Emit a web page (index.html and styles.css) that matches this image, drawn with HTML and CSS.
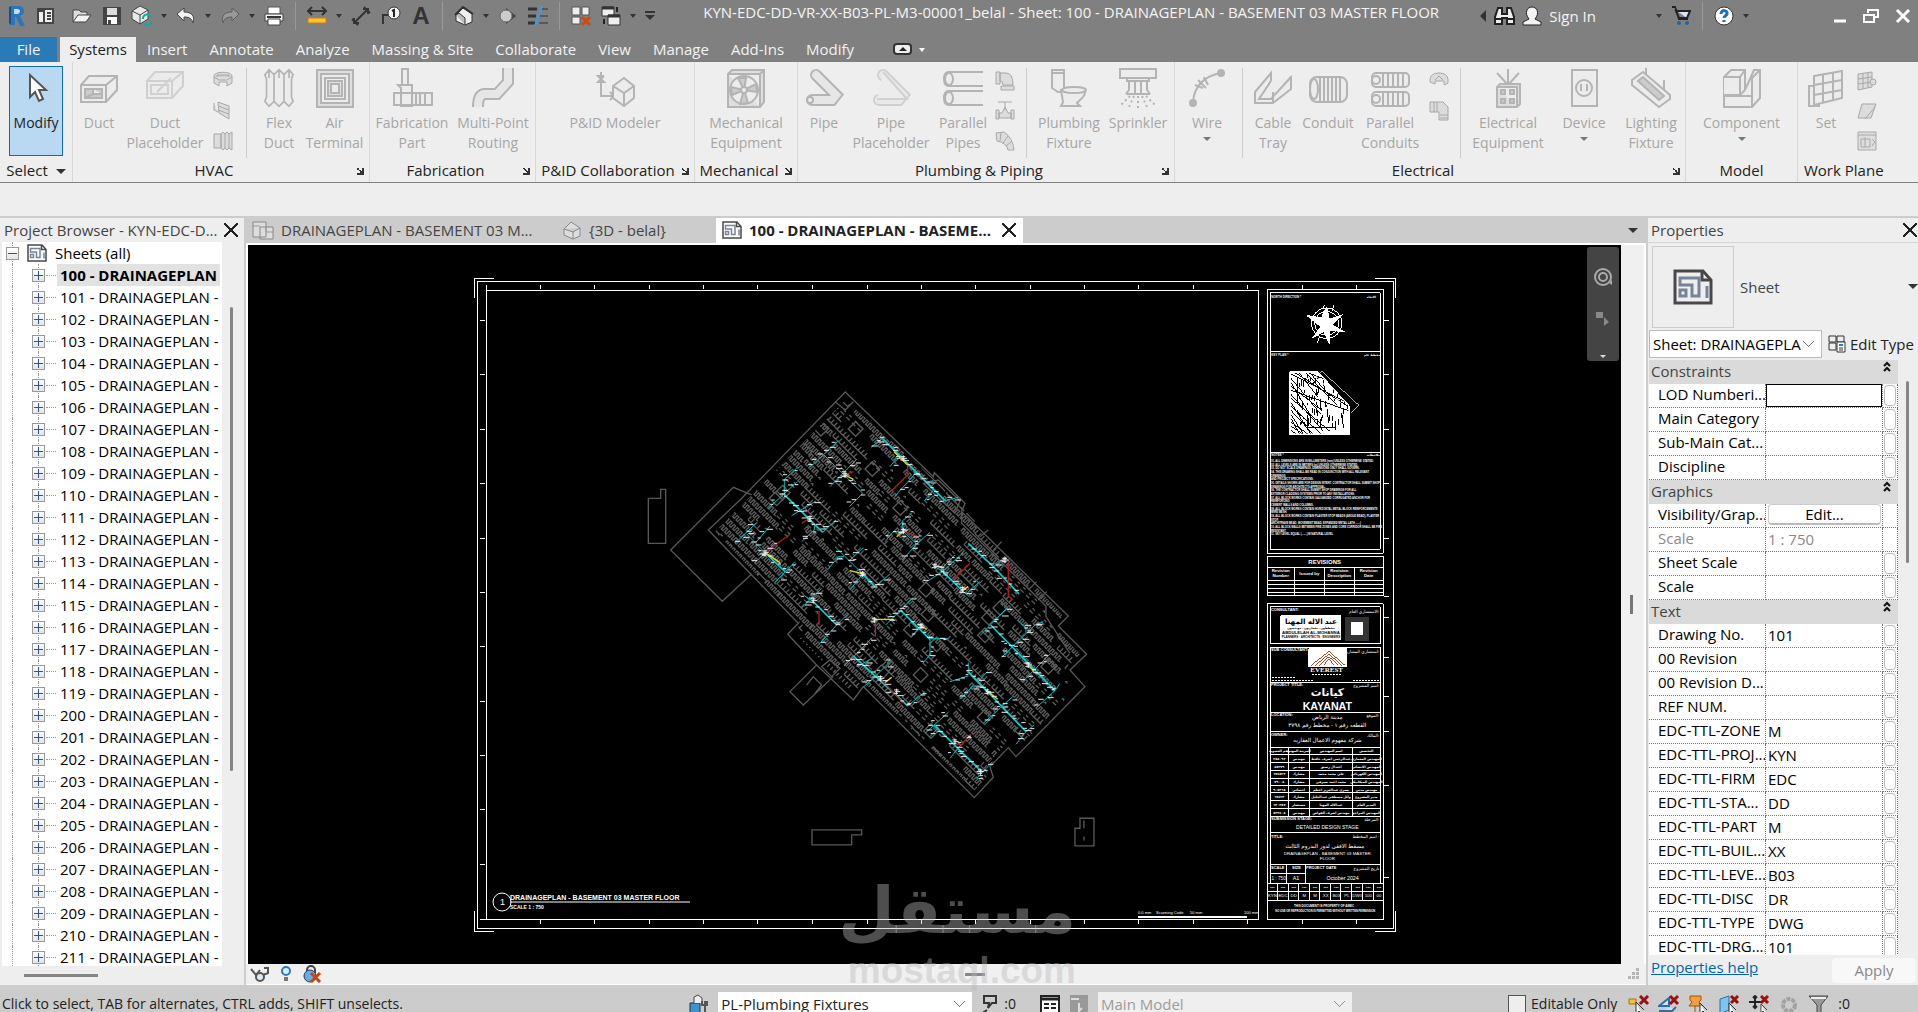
FILE: index.html
```html
<!DOCTYPE HTML>
<html lang="en">

<head>
  <meta charset="utf-8">
  <title>KYN-EDC-DD-VR-XX-B03-PL-M3-00001_belal</title>
  <link rel="stylesheet" href="styles.css">
</head>

<body>
<header class="titlebar">
  <div class="quick">
    <button class="q-logo" aria-label="Application"><svg width="18" height="22" viewBox="0 0 18 22"><path d="M3 1h7c4 0 6 2 6 5 0 2-1 4-4 5l5 10h-5L8 12H7v8H2z" fill="#2a76bd"/><path d="M6 4h3c2 0 3 1 3 2s-1 3-3 3H6z" fill="#bfe0f7"/><path d="M1 2l2-1v19l-2-2z" fill="#174f86"/></svg></button>
    <button class="q-icon" aria-label="Home"><svg width="20" height="20"><path d="M1 2h17v16H1z" fill="#444"/><path d="M3 6h4v10H3zM9 4h7v12H9z" fill="#eee"/><path d="M11 7h4M11 10h4M11 13h4" stroke="#444" stroke-width="2"/></svg></button>
    <button class="q-icon q-open" aria-label="Open"><svg width="20" height="20"><path d="M1 16V4h6l2 2h6v3" fill="#ddd" stroke="#444"/><path d="M1 16l5-7h13l-5 7z" fill="#f4f4f4" stroke="#444"/></svg></button>
    <button class="q-icon" aria-label="Save"><svg width="20" height="20"><path d="M1 1h18v18H1z" fill="#444"/><path d="M5 2h10v7H5z" fill="#ddd"/><path d="M5 11h10v7H5z" fill="#fff"/><path d="M6 14h3v4H6z" fill="#444"/></svg></button>
    <button class="q-icon" aria-label="Sync"><svg width="22" height="22"><path d="M1 6l8-5 8 4v9l-8 5-8-5z" fill="#e8e8e8" stroke="#444"/><path d="M1 6l8 4 8-5M9 10v9" fill="none" stroke="#444"/><path d="M12 14a4 4 0 0 1 8-1M20 16a4 4 0 0 1-7 3" fill="none" stroke="#13a7a7" stroke-width="2"/></svg></button>
    <button class="q-drop" aria-label="Sync options"></button>
    <button class="q-icon" aria-label="Undo"><svg width="20" height="18"><path d="M1 7l7-6v4c8 0 11 4 9 11-1-4-3-6-9-6v4z" fill="#f2f2f2" stroke="#444"/></svg></button>
    <button class="q-drop" aria-label="Undo list"></button>
    <button class="q-icon" aria-label="Redo"><svg width="20" height="18"><path d="M19 7l-7-6v4C4 5 1 9 3 16c1-4 3-6 9-6v4z" fill="#999" stroke="#5c5c5c"/></svg></button>
    <button class="q-drop" aria-label="Redo list"></button>
    <button class="q-icon" aria-label="Print"><svg width="20" height="20"><path d="M4 1h12v7H4z" fill="#fff" stroke="#555"/><path d="M1 8h18v7H1z" fill="#f3f3f3" stroke="#444"/><path d="M4 13h12v6H4z" fill="#fff" stroke="#444"/><path d="M3 11h14" stroke="#333" stroke-width="2"/></svg></button>
    <i class="q-sep"></i>
    <button class="q-icon" aria-label="Measure"><svg width="20" height="20"><path d="M1 5h18M5 1L1 5l4 4M15 1l4 4-4 4" fill="none" stroke="#333" stroke-width="2"/><path d="M1 12h18v5H1z" fill="#f7c52d" stroke="#d77a12"/></svg></button>
    <button class="q-drop" aria-label="Measure options"></button>
    <button class="q-icon" aria-label="Aligned dimension"><svg width="20" height="20"><path d="M3 17L17 3M1 13l6 6M13 1l6 6M3 12v5h5M12 3h5v5" fill="none" stroke="#333" stroke-width="2"/></svg></button>
    <button class="q-icon" aria-label="Tag"><svg width="20" height="20"><path d="M2 18V9h7" fill="none" stroke="#333" stroke-width="2"/><circle cx="13" cy="7" r="6" fill="#f4f4f4" stroke="#333"/><path d="M11 5l2-1v7" fill="none" stroke="#222" stroke-width="2"/></svg></button>
    <button class="q-icon q-text" aria-label="Text">A</button>
    <i class="q-sep"></i>
    <button class="q-icon" aria-label="Default 3D view"><svg width="20" height="20"><path d="M2 9l7-7 9 6v8l-7 3-9-4z" fill="#eee" stroke="#333"/><path d="M2 9l3-2 6 5v7" fill="#bbb" stroke="#333"/><path d="M1 9l8-8 10 7" fill="none" stroke="#333" stroke-width="2"/></svg></button>
    <button class="q-drop" aria-label="3D options"></button>
    <button class="q-icon" aria-label="Section"><svg width="20" height="20"><path d="M8 2l10 8-10 8z" fill="#444"/><circle cx="8" cy="10" r="6" fill="#ccc" stroke="#666"/></svg></button>
    <button class="q-icon" aria-label="Thin lines"><svg width="20" height="20"><path d="M0 3h9M0 10h8M0 17h7" stroke="#333" stroke-width="3"/><path d="M13 3h7M12 10h8M11 17h9" stroke="#333"/><path d="M14 0L7 20" stroke="#3d9ae8" stroke-width="2"/></svg></button>
    <i class="q-sep"></i>
    <button class="q-icon" aria-label="Close inactive"><svg width="20" height="20"><path d="M1 1h8v8H1zM11 1h7v8h-7zM1 11h8v7H1z" fill="#eee" stroke="#555"/><path d="M11 11l8 8M19 11l-8 8" stroke="#cf4a13" stroke-width="3"/></svg></button>
    <button class="q-icon" aria-label="Switch windows"><svg width="20" height="20"><path d="M1 1h12v9H1zM7 9h12v10H7z" fill="#eee" stroke="#333"/><path d="M1 2h12M7 10h12" stroke="#333" stroke-width="3"/><path d="M16 1v5M3 13v5" stroke="#222" stroke-width="2"/></svg></button>
    <button class="q-drop" aria-label="Window list"></button>
    <button class="q-custom" aria-label="Customize"><svg width="12" height="10"><path d="M1 1h10" stroke="#333" stroke-width="2"/><path d="M1 4h10L6 9z" fill="#333"/></svg></button>
  </div>
  <h1 class="doc-title">KYN-EDC-DD-VR-XX-B03-PL-M3-00001_belal - Sheet: 100 - DRAINAGEPLAN - BASEMENT 03 MASTER FLOOR</h1>
  <div class="account">
    <button class="q-left" aria-label="Collapse search"></button>
    <button class="q-icon" aria-label="Search"><svg width="22" height="20"><path d="M4 2h4v6h5V2h4l3 9v7h-7v-6H8v6H1v-7z" fill="#eee" stroke="#222" stroke-width="2"/><path d="M1 13h7M13 13h7" stroke="#222" stroke-width="2"/></svg></button>
    <button class="sign-in"><svg width="20" height="20"><path d="M1 19v-3l6-3c-5-6-2-12 3-12s8 6 3 12l6 3v3z" fill="#f2f2f2" stroke="#222"/></svg>Sign In</button>
    <button class="q-drop" aria-label="Account"></button>
    <button class="q-icon" aria-label="App store"><svg width="20" height="20"><path d="M1 1h3l4 12h9M5 5h14l-3 7H8z" fill="#dce6f2" stroke="#222" stroke-width="2"/><circle cx="8" cy="17" r="2" fill="#2563a8"/><circle cx="16" cy="17" r="2" fill="#2563a8"/></svg></button>
    <i class="q-sep"></i>
    <button class="q-icon" aria-label="Help"><svg width="22" height="22"><circle cx="11" cy="11" r="9" fill="#fff" stroke="#333"/><path d="M8 9c0-5 7-4 6 0-1 2-3 2-3 4M11 15v2" fill="none" stroke="#1b6fc0" stroke-width="3"/></svg></button>
    <button class="q-drop" aria-label="Help menu"></button>
    <div class="window-buttons">
      <button aria-label="Minimize"><svg width="14" height="14"><path d="M1 12h12" stroke="#fff" stroke-width="3"/></svg></button>
      <button aria-label="Restore"><svg width="16" height="16"><path d="M5 5V2h10v7h-4M1 7h10v7H1z" fill="none" stroke="#fff" stroke-width="2"/></svg></button>
      <button aria-label="Close"><svg width="16" height="16"><path d="M2 2l12 12M14 2L2 14" stroke="#fff" stroke-width="3"/></svg></button>
    </div>
  </div>
</header>

<nav class="tabs">
  <button class="tab-file">File</button>
  <button class="tab-active">Systems</button>
  <button>Insert</button>
  <button>Annotate</button>
  <button>Analyze</button>
  <button>Massing &amp; Site</button>
  <button>Collaborate</button>
  <button>View</button>
  <button>Manage</button>
  <button>Add-Ins</button>
  <button>Modify</button>
  <button class="tab-toggle" aria-label="Minimize ribbon"><svg width="32" height="12"><rect x="1" y="1" width="17" height="10" rx="3" fill="#eee" stroke="#333" stroke-width="2"/><path d="M6 8l4-4 4 4z" fill="#222"/><path d="M26 5h6l-3 4z" fill="#fff"/></svg></button>
</nav>

<section class="ribbon">
  <div class="panel panel-select">
    <div class="tools">
      <button class="tool tool-modify"><svg width="36" height="40" viewBox="0 0 36 40"><path d="M12 6v22l5-5 4 9 4-2-4-9h7z" fill="#fff" stroke="#555" stroke-width="2"/></svg>Modify</button>
    </div>
    <div class="panel-title">Select <i class="down"></i></div>
  </div>

  <div class="panel panel-hvac">
    <div class="tools">
      <button class="tool"><svg class="art" width="40" height="40"><path d="M2 17L10 8h28v14L27 34H2z"/><path d="M2 17h25v17M27 17L38 8"/><path class="hole" d="M6 21h17v9H6z"/><path d="M14 21v5h9M14 26l-8 4"/></svg>Duct</button>
      <button class="tool"><svg class="art faint" width="40" height="40"><path d="M2 13L10 4h28v14L27 30H2z"/><path d="M2 13h25v17M27 13L38 4"/><path d="M6 17h17v9H6zM12 24l14-14"/></svg>Duct<br>Placeholder</button>
      <div class="small-tools">
        <button aria-label="Duct fitting"><svg class="art" width="20" height="20"><path d="M1 5c0-5 18-5 18 0v7l-5 3v-4H6v4l-5-3z"/><path class="hole" d="M4 4h12v3H4z"/><path d="M1 6l5 3h8l5-3"/></svg></button>
        <button aria-label="Duct accessory"><svg class="art" width="20" height="20"><path d="M5 1l11 4v13L6 12zM5 5l11 4M5 9l11 4M1 2v7l4 2"/></svg></button>
        <button aria-label="Convert to flex duct"><svg class="art" width="20" height="20"><path d="M1 3h7v14H1zM8 3l2-2 2 2 2-2 2 2 3-2v18l-3-2-2 2-2-2-2 2-2-2zM12 3v14M16 3v14"/></svg></button>
      </div>
      <i class="tool-sep"></i>
      <button class="tool"><svg class="art" width="36" height="48" viewBox="0 0 36 48"><path d="M1 8l5-6 6 6 6-6 6 6 6-6 5 6-2 5v22l2 5-5 6-6-6-6 6-6-6-6 6-5-6 2-5V13zM12 8v32M24 8v32M6 2v10M18 2v10M30 2v10"/></svg>Flex<br>Duct</button>
      <button class="tool"><svg class="art" width="38" height="40"><path class="shade" d="M1 2h36v37H1z"/><path d="M5 6h28v29H5zM9 10h20v21H9z"/><path class="shade" d="M12 13h14v15H12z"/><path d="M15 16h8v9h-8z"/></svg>Air<br>Terminal</button>
    </div>
    <div class="panel-title has-launch">HVAC<i class="launch"></i></div>
  </div>

  <div class="panel panel-fabrication">
    <div class="tools">
      <button class="tool"><svg class="art" width="40" height="40"><path d="M10 1h6v16h-6zM2 25h38v12H2zM6 17h14v21H9V20z"/><path d="M24 25v12M28 25v12M33 25v12"/></svg>Fabrication<br>Part</button>
      <button class="tool"><svg class="art" width="40" height="40"><path class="pipe-edge" d="M35 0v14L24 26H12q-7 0-7 13"/><path class="pipe" d="M35 0v14L24 26H12q-7 0-7 13"/></svg>Multi-Point<br>Routing</button>
    </div>
    <div class="panel-title has-launch">Fabrication<i class="launch"></i></div>
  </div>

  <div class="panel panel-pid">
    <div class="tools">
      <button class="tool"><svg class="art" width="40" height="40"><path d="M6 4v24h12M3 8l6 6M9 8l-6 6h6L3 8h6M15 24l4 4-4 4"/><path d="M18 18l11-8 10 8v12l-10 8-11-8z"/><path d="M18 18l11 7 10-7M29 25v13"/></svg>P&amp;ID Modeler</button>
    </div>
    <div class="panel-title has-launch">P&amp;ID Collaboration<i class="launch"></i></div>
  </div>

  <div class="panel panel-mechanical">
    <div class="tools">
      <button class="tool"><svg class="art" width="40" height="40"><path class="shade" d="M2 6l4-4h32v32l-4 5H2z"/><path d="M2 6h32v33M34 6l4-4"/><circle cx="18" cy="22" r="14"/><path class="hole" d="M18 22L12 10h8zM18 22l12-6 1 8zM18 22l4 13-8 1zM18 22L6 27l-1-8z"/><circle cx="18" cy="22" r="3"/></svg>Mechanical<br>Equipment</button>
    </div>
    <div class="panel-title has-launch">Mechanical<i class="launch"></i></div>
  </div>

  <div class="panel panel-plumbing">
    <div class="tools">
      <button class="tool"><svg class="art" width="40" height="40"><path class="pipe-edge" stroke-linecap="round" d="M12 7l20 20-4 5H8"/><path class="pipe" stroke-linecap="round" d="M12 7l20 20-4 5H8"/><circle cx="6" cy="32" r="3"/></svg>Pipe</button>
      <button class="tool"><svg class="art faint" width="40" height="40"><path class="pipe-edge" stroke-linecap="round" d="M12 7l20 20-4 5H8"/><path class="pipe" stroke-linecap="round" d="M12 7l20 20-4 5H8"/><path d="M12 4l24 27H6"/></svg>Pipe<br>Placeholder</button>
      <button class="tool"><svg class="art" width="40" height="40"><path d="M40 4H6q-5 0-5 7t5 7h34M40 23H6q-5 0-5 7t5 7h34"/><ellipse cx="6" cy="11" rx="4" ry="6"/><ellipse cx="6" cy="30" rx="4" ry="6"/></svg>Parallel<br>Pipes</button>
      <div class="small-tools">
        <button aria-label="Pipe fitting"><svg class="art" width="20" height="20"><path d="M1 1h4v12H1zM5 2h6q7 0 7 12H8q0-4-3-4zM6 15h13v4H6z"/></svg></button>
        <button aria-label="Pipe accessory"><svg class="art" width="20" height="20"><path d="M3 1h14M10 1v8M1 9h3v9H1zM16 9h3v9h-3zM4 12h3l3-6 3 6h3v5H4z"/></svg></button>
        <button aria-label="Flex pipe"><svg class="art" width="20" height="20"><path d="M1 2l8-1q9 6 10 18h-6Q12 12 2 10zM6 1l-1 9M13 5l-5 7M17 10l-6 5"/></svg></button>
      </div>
      <i class="tool-sep"></i>
      <button class="tool"><svg class="art" width="40" height="40"><path d="M3 2h12v22h-6L3 20z"/><path d="M3 5h12M12 22h24q1 5-4 9l-4 4 3 3H12l2-4z"/><ellipse cx="25" cy="22" rx="12" ry="3"/></svg>Plumbing<br>Fixture</button>
      <button class="tool"><svg class="art" width="40" height="40"><path d="M2 1h36v9H2zM9 10h22v3H9zM11 13v9l-3 4M17 13v14M23 13v14M29 13v9l3 4M8 26h24"/><path stroke-dasharray="2 3" d="M12 28L3 37M16 28l-5 11M20 28v12M24 28l5 11M28 28l9 9"/></svg>Sprinkler</button>
    </div>
    <div class="panel-title has-launch">Plumbing &amp; Piping<i class="launch"></i></div>
  </div>

  <div class="panel panel-electrical">
    <div class="tools">
      <button class="tool"><svg class="art" width="40" height="40"><path class="thin" d="M6 34Q8 10 34 5"/><circle class="dot" cx="6" cy="35" r="3"/><circle class="dot" cx="34" cy="5" r="3"/><path d="M8 17l8 3M17 9l4 8M11 12l8 8"/></svg>Wire<i class="down"></i></button>
      <i class="tool-sep"></i>
      <button class="tool"><svg class="art" width="40" height="40"><path d="M2 24L18 5v8l-5 8 5 4L38 9v12L20 35H2z"/><path d="M2 24v11M20 24v11M18 13L6 31h12L38 9"/></svg>Cable<br>Tray</button>
      <button class="tool"><svg class="art" width="40" height="40"><rect x="2" y="9" width="37" height="25" rx="7"/><ellipse cx="6" cy="21" rx="4" ry="10"/><path d="M12 9v25M16 9v25M20 9v25M24 9v25M28 9v25M32 9v25"/></svg>Conduit</button>
      <button class="tool"><svg class="art" width="40" height="40"><rect x="2" y="5" width="37" height="14" rx="4"/><rect x="2" y="24" width="37" height="14" rx="4"/><circle cx="6" cy="12" r="4"/><circle cx="6" cy="31" r="4"/><path d="M13 5v14M18 5v14M23 5v14M28 5v14M33 5v14M13 24v14M18 24v14M23 24v14M28 24v14M33 24v14"/></svg>Parallel<br>Conduits</button>
      <div class="small-tools">
        <button aria-label="Cable tray fitting"><svg class="art" width="20" height="20"><path d="M1 8q1-6 9-6t9 6v4l-4 2v-4H6v3l-5-2z"/><path d="M6 9l4-4 4 4"/></svg></button>
        <button aria-label="Conduit fitting"><svg class="art" width="20" height="20"><path d="M1 1h13l5 5v13h-9v-8H1zM5 1v10M8 1v10M11 14h8M11 17h8"/></svg></button>
      </div>
      <i class="tool-sep"></i>
      <button class="tool"><svg class="art" width="40" height="40"><path d="M20 1v16M9 5l11 12L31 5"/><path class="shade" d="M9 19l3-3h20v20l-3 3H9z"/><path d="M9 19h20v20"/><path class="hole" d="M13 22h4v4h-4zM22 22h4v4h-4zM13 31h4v4h-4zM22 31h4v4h-4z"/></svg>Electrical<br>Equipment</button>
      <button class="tool"><svg class="art" width="40" height="40"><path d="M8 2h25v36H8z"/><circle cx="20" cy="20" r="8"/><path d="M17 16v7M23 16v7"/></svg>Device<i class="down"></i></button>
      <button class="tool"><svg class="art" width="40" height="40"><path d="M15 0v8M33 12v10"/><path d="M1 12l11-8 27 23v4l-11 8L1 17z"/><path class="hole" d="M7 13l5-4 21 19-5 4z"/></svg>Lighting<br>Fixture</button>
    </div>
    <div class="panel-title has-launch">Electrical<i class="launch"></i></div>
  </div>

  <div class="panel panel-model">
    <div class="tools">
      <button class="tool"><svg class="art" width="40" height="40"><path d="M2 9l7-7h14v20L32 2h6v28l-8 9H2z"/><path d="M2 9h16v18H2M18 9l5-7M18 27l5-5M30 10v19M30 10l8-8M2 28h28v11"/></svg>Component<i class="down"></i></button>
    </div>
    <div class="panel-title">Model</div>
  </div>

  <div class="panel panel-plane">
    <div class="tools">
      <button class="tool"><svg class="art" width="40" height="40"><path d="M3 18h10v20H3z"/><path d="M8 8l28-5v27L8 37zM8 17l28-5M8 27l28-5M17 6v29M27 5v27"/></svg>Set</button>
      <div class="small-tools">
        <button aria-label="Show"><svg class="art" width="20" height="20"><path d="M1 3l14-2v15L1 19zM1 8l14-2M1 13l14-2M6 2v16M11 2v15"/><circle cx="16" cy="11" r="3"/></svg></button>
        <button aria-label="Reference plane"><svg class="art" width="20" height="20"><path d="M5 3h14L14 17H1zM8 18L18 6"/></svg></button>
        <button aria-label="Viewer"><svg class="art" width="20" height="20"><path class="shade" d="M1 1h18v18H1z"/><path d="M1 4h18M4 8h9v8H4zM8 6v10M15 8l3 3-3 4"/></svg></button>
      </div>
    </div>
    <div class="panel-title">Work Plane</div>
  </div>
</section>
<div class="options-bar"></div>

<main class="workspace">
  <aside class="browser">
    <div class="dock-title"><h2>Project Browser - KYN-EDC-D...</h2><button class="close" aria-label="Close project browser"></button></div>
    <div class="tree-area">
      <ul class="tree" id="sheet-tree">
        <li class="root"><button class="toggle minus" aria-label="Collapse"></button>
          <svg class="sheet-icon" width="20" height="18" viewBox="0 0 40 36"><use href="#sheet"/></svg><span>Sheets (all)</span></li>
      </ul>
      <div class="v-scroll"><i></i></div>
    </div>
    <div class="h-scroll"><i></i></div>
  </aside>

  <section class="views">
    <div class="view-tabs">
      <button><svg width="22" height="20"><path d="M1 2h13v15H1zM8 7h13v12H8z" fill="#ddd" stroke="#888"/><path d="M1 6h7M14 7v5h7" fill="none" stroke="#999"/></svg>DRAINAGEPLAN - BASEMENT 03 M...</button>
      <button><svg width="20" height="20"><path d="M2 9l7-7 9 6v8l-7 3-9-4zM11 11v8M2 9l9 3 7-4" fill="#ddd" stroke="#888"/></svg>{3D - belal}</button>
      <button class="current"><svg width="20" height="18" viewBox="0 0 40 36"><use href="#sheet"/></svg>100 - DRAINAGEPLAN - BASEME...<i class="close"></i></button>
      <i class="down"></i>
    </div>
    <div class="view-body">
      <div class="canvas">
        <svg class="drawing" viewBox="248 245 1373 719">
          <defs>
            <symbol id="sheet" viewBox="0 0 40 36"><path d="M2 2h28l8 9v23H2z" fill="#f0f0f0" stroke="#484848" stroke-width="3"/><path d="M29 2v9h9" fill="#ddd" stroke="#484848" stroke-width="3"/><path d="M7 9h19v18h-7V16H7zM7 21h6v6H7zM34 17v12" fill="none" stroke="#76849a" stroke-width="3"/></symbol>
            <clipPath id="plan-clip"><path d="M616 90L880 325 960 405 1270 738 1240 768 1320 853 1275 900 1315 950 1128 1140 1100 1120 1045 1180 1040 1222 1003 1262 670 935 640 970 475 800 475 745 225 485 330 380z"/></clipPath>
            <clipPath id="key-clip"><path d="M122 309H205L298 410V491H122z"/></clipPath>
          </defs>

          <!-- sheet border -->
          <g class="frame">
            <path d="M494 278H474V298M1375 278H1395V298M494 931H474V911M1375 931H1395V911"/>
            <path d="M477 281H1393V928H477zM486 290H1258V919H486zM486 285V919M480 919H486"/>
            <path d="M486 285v4M540 285v4M594 285v4M649 285v4M703 285v4M757 285v4M812 285v4M867 285v4M921 285v4M975 285v4M1030 285v4M1084 285v4M1138 285v4M1193 285v4M1247 285v4M1302 285v4M1356 285v4M540 919v5M594 919v5M649 919v5M703 919v5M757 919v5M812 919v5M867 919v5M921 919v5M975 919v5M1030 919v5M1084 919v5M1138 919v5M1193 919v5M1247 919v5M1302 919v5M1356 919v5"/>
            <path d="M480 320h5M480 374h5M480 429h5M480 483h5M480 538h5M480 592h5M480 646h5M480 701h5M480 755h5M480 809h5M480 864h5M1384 320h5M1384 374h5M1384 429h5M1384 483h5M1384 538h5M1384 596h5M1384 617h5M1384 657h5M1384 696h5M1384 731h5M1384 785h5M1384 877h5"/>
            <path d="M1138 917H1247" class="heavy"/>
          </g>

          <!-- floor plan, drawn on a grid three times finer than the sheet -->
          <g class="plan" transform="translate(640 370) scale(.3333)">
            <g clip-path="url(#plan-clip)"><path class="clutter" id="clutter"/></g>
            <g class="outline">
              <path d="M616 66L880 320 883 308 975 400 965 425 1285 738 1255 768 1340 853 1290 900 1335 950 1128 1160 1105 1133 1050 1190 1060 1222 1003 1283 670 950 640 990 530 885 443 793 475 760 205 480 300 390z"/>
              <path d="M616 120L585 95M640 95L616 120M965 425V460L1200 690 1218 708V740L1290 850M895 330L960 392 945 430 850 340zM1020 500L1045 480M1060 540L1085 515M1165 660L1190 635M1195 690L1220 665"/>
              <path d="M335 375L280 352 92 540 247 694 335 612M25 385H62V358H77V520H25zM530 885L450 965 490 1005 580 920M500 945L520 920 545 945 525 970M545 890L575 920 600 895 570 870z"/>
              <path d="M516 1380H665V1395H635V1425H516zM1305 1428V1375H1320V1345H1362V1428zM1332 1352V1375M1332 1400V1412"/>
            </g>
            <path class="cyan bold" d="M727 205L915 392M433 374L548 487M375 548L435 605M668 612L705 650M522 697L590 765M783 722L870 808M985 520L1060 590 1137 672M908 605L970 665M1052 765L1245 962M985 905L1158 1085M640 858L803 1008M882 1065L1025 1205"/>
            <path class="cyan" id="pipes" d="M727 205L693 232M915 392L955 382M865 343L878 330M825 305V312L765 378M770 265L750 290M880 360L853 393M595 212L510 292M552 255L668 370 628 410M650 268L570 350M470 295L433 328V374M548 487L588 450M472 335L385 415M528 393L455 437M523 465V480L485 515M348 460L285 520M320 492L375 548M390 468L350 515M465 575L405 637M405 520L345 578M585 530L668 612M705 650L750 612M670 533L630 570M612 560H595L565 597M668 612L630 660M815 430L788 452V482L830 522 787 570M735 515L760 485H790M870 487L830 522M545 655L483 715M490 675L522 697M590 765L622 733M590 765L540 820M820 682L737 765M870 806H925M870 808V855L848 880M840 770L815 800M1092 568L1060 590M970 548L908 605 855 638M878 585L908 605M970 665L988 680M945 555L900 600M1020 635L985 665M1100 715L1020 797M1245 962L1190 1012M1260 940L1245 962M1210 755L1185 765 1085 862M1135 752L1158 775V790M1232 850L1148 935M985 878V905M1158 1085L1183 1065M1158 1085L1128 1123M1042 905L1015 935M985 918L930 935M1023 948H1000L958 988M1118 980L1030 1060M697 803L612 888M803 1008L855 965M697 865L650 890M757 868L705 920 672 950M925 1027L855 1090M893 1075L870 1100M990 1095L950 1140 930 1165M1058 1175L1010 1225"/>
            <path class="red" d="M803 285V315L755 362M375 548L450 493M537 722V765M990 580L938 630M1105 575V680L1120 690M790 483L832 500M725 930L790 1000M940 1120L965 1125 992 1093M615 315L640 305M485 460L500 450"/>
            <path class="yellow" d="M762 245L803 285M375 548L420 578M630 602L668 612M705 748H762M840 765L860 778M735 938L755 922M1045 965L1073 988M790 483L770 500M615 315L640 328M970 658L985 650M1170 890L1182 905"/>
            <path class="magenta" d="M706 760V800"/>
            <path class="tags" id="tags"/>
          </g>

          <g class="view-title">
            <circle cx="502" cy="902" r="9"/>
            <text x="500" y="905" font-size="9">1</text>
            <text x="510" y="900" font-size="7" font-weight="bold">DRAINAGEPLAN - BASEMENT 03 MASTER FLOOR</text>
            <path d="M510 902H690"/>
            <text x="510" y="909" font-size="5" font-weight="bold">SCALE 1 : 750</text>
            <text x="1138" y="914" font-size="4">0.0 mm</text><text x="1156" y="914" font-size="4">Scanning Code</text><text x="1190" y="914" font-size="4">50 mm</text><text x="1244" y="914" font-size="4">100 mm</text>
          </g>

          <!-- title block: key plan, notes, revisions -->
          <g class="block" transform="translate(1250 270) scale(.3333)">
            <path d="M52 58H400V850H52zM61 68H391V838H61zM61 244H391M61 547H391M52 859H400V978H52zM52 892H400M52 931H400M52 943H400M52 955H400M52 967H400M133 892V978M223 892V978M313 892V978"/>
            <g class="compass">
              <circle cx="230" cy="160" r="46"/><circle cx="230" cy="160" r="36"/>
              <path class="solid" d="M230 110l8 38 40-14-32 30 38 22-44-6-2 42-16-38-34 20 24-34-42-34 44 8z"/>
              <path d="M172 135l20 8M284 186l-20-8M202 220l6-18M218 118l6-14M252 105l-6 18"/>
            </g>
            <path class="key-solid" d="M120 306H205L300 410V494H120z"/>
            <g clip-path="url(#key-clip)"><path class="key-hatch" id="key-hatch"/></g>
            <path class="thin" d="M215 303L327 406 302 430 200 320z"/>
            <g class="tiny" font-size="9">
              <text x="64" y="83">NORTH DIRECTION *</text><text x="350" y="83">الاتجاه</text>
              <text x="64" y="258">KEY PLAN *</text><text x="342" y="258">مخطط عام</text>
              <text x="64" y="558">NOTES *</text><text x="350" y="558">ملاحظات</text>
            </g>
            <g class="tiny notes" id="notes" font-size="8"></g>
            <g class="mid" font-size="18" font-weight="bold">
              <text x="224" y="881">REVISIONS</text>
            </g>
            <g class="mid" font-size="13" font-weight="bold">
              <text x="92" y="906">Revision</text><text x="92" y="921">Number</text><text x="178" y="915">Issued by</text>
              <text x="268" y="906">Revision</text><text x="268" y="921">Description</text><text x="356" y="906">Revision</text><text x="356" y="921">Date</text>
            </g>
          </g>

          <!-- title block: firms, project, approvals -->
          <g class="block" transform="translate(1250 590) scale(.3333)">
            <path d="M52 41H400V989H52zM61 50H391V162H61zM61 172H391V880H61zM61 277H391M61 367H391M61 425H391M61 472H391M61 495H391M61 517H391M61 541H391M61 565H391M61 587H391M61 609H391M61 633H391M61 655H391M61 679H391M61 727H391M61 823H391M115 472V679M179 472V679M308 472V679M111 823V880M166 823V880M61 850H166M52 880H400M52 905H400M52 931H400M83 880V931M115 880V931M146 880V931M178 880V931M210 880V931M241 880V931M272 880V931M306 880V931M337 880V931M370 880V931"/>
            <path class="solid" d="M93 78H273V150H93zM303 99H339V135H303zM177 177H291V231H177z"/>
            <path class="speckle" d="M294 89H348V144H294z"/>
            <path class="roof" d="M184 226L237 184 285 226M196 226L237 192 275 226M208 226L237 200 265 226M220 226L237 208 254 226"/>
            <g class="logo-text">
              <text x="183" y="101" font-size="22">عبد الاله المهنا</text>
              <text x="183" y="116" font-size="9">مخططون - معماريون - مهندسون</text>
              <text x="183" y="131" font-size="13">ABDULELAH AL-MOHANNA</text>
              <text x="183" y="145" font-size="9">PLANNERS · ARCHITECTS · ENGINEERS</text>
            </g>
            <text class="serif" x="230" y="245" font-size="21">EVEREST</text>
            <path d="M186 253H276M66 262H138M66 271H190M310 271H388" stroke-dasharray="6 3"/>
            <g class="tiny" font-size="12">
              <text x="63" y="62">CONSULTANT:</text><text x="63" y="184">SUB CONSULTANT:</text><text x="63" y="288">PROJECT TITLE:</text>
              <text x="63" y="378">LOCATION:</text><text x="63" y="437">OWNER:</text><text x="63" y="690">SUBMISSION STAGE:</text>
              <text x="63" y="743">TITLE:</text><text x="63" y="837">SCALE</text><text x="126" y="837">SIZE</text><text x="168" y="837">PROJECT DATE</text>
            </g>
            <g class="arabic" font-size="13">
              <text x="388" y="68">الاستشاري العام:</text><text x="388" y="190">استشاري المشاريع:</text><text x="388" y="292">اسم المشروع:</text>
              <text x="388" y="382">الموقع:</text><text x="388" y="442">المالك:</text><text x="388" y="694">المرحلة:</text>
              <text x="388" y="744">اسم المخطط :</text><text x="388" y="839">تاريخ المشروع</text>
            </g>
            <g class="mid">
              <text x="232" y="318" font-size="32" font-weight="bold">كيانات</text>
              <text x="232" y="388" font-size="17">مدينة الرياض</text>
              <text x="232" y="412" font-size="17">القطعه رقم ١ - مخطط رقم ٣٧٩٨</text>
              <text x="232" y="456" font-size="17">شركة مفهوم الاعمال العقاريه</text>
              <text x="225" y="773" font-size="17">مسقط الافقى لدور البدروم الثالث</text>
            </g>
            <g class="mid">
              <text x="232" y="360" font-size="32" font-weight="bold">KAYANAT</text>
              <text x="232" y="717" font-size="15">DETAILED DESIGN STAGE</text>
              <text x="232" y="794" font-size="13">DRAINAGEPLAN - BASEMENT 03 MASTER</text>
              <text x="232" y="811" font-size="13">FLOOR</text>
              <text x="86" y="871" font-size="14">1 : 750</text><text x="138" y="869" font-size="16">A1</text><text x="278" y="869" font-size="16">October 2024</text>
              <text x="222" y="951" font-size="9" font-weight="bold">THIS DOCUMENT IS PROPERTY OF AMEC</text>
              <text x="226" y="965" font-size="8" font-weight="bold">NO USE OR REPRODUCTION IS PERMITTED WITHOUT WRITTEN PERMISSION</text>
            </g>
            <g class="mid" id="approvals" font-size="10" font-weight="bold"></g>
            <g class="mid" id="codes" font-size="13"></g>
          </g>
        </svg>
        <div class="nav-bar">
          <button aria-label="Steering wheel"><svg width="20" height="20"><circle cx="10" cy="10" r="8" fill="none" stroke="#aaa" stroke-width="2"/><circle cx="10" cy="10" r="4" fill="none" stroke="#aaa" stroke-width="2"/><path d="M16 16l3-3v5z" fill="#aaa"/></svg></button>
          <button aria-label="Zoom region"><svg width="16" height="16"><path d="M1 1h7v6H1zM9 6l5 5-5 4z" fill="#888"/></svg></button>
          <button class="nav-more" aria-label="Navigation options"></button>
        </div>
      </div>
      <div class="view-scroll"><i></i></div>
    </div>
    <div class="view-controls">
      <button aria-label="Temporary hide"><svg width="20" height="18"><path d="M1 4l5 6 4-5" fill="none" stroke="#555" stroke-width="2"/><circle cx="10" cy="12" r="4" fill="#dcebf5" stroke="#555" stroke-width="2"/><path d="M13 10l5-2V3h-4" fill="none" stroke="#555" stroke-width="2"/></svg></button>
      <button aria-label="Reveal hidden"><svg width="12" height="18"><circle cx="6" cy="6" r="4" fill="#d9f0ff" stroke="#2c7bc0" stroke-width="2"/><path d="M4 12h4v4H4z" fill="#777"/></svg></button>
      <button aria-label="Reveal constraints"><svg width="20" height="18"><path d="M5 8V5a4 4 0 0 1 8 0v3" fill="none" stroke="#444" stroke-width="2"/><circle cx="8" cy="11" r="6" fill="#62b0e8" stroke="#335"/><path d="M9 8l9 9M18 8l-9 9" stroke="#c4451c" stroke-width="3"/></svg></button>
      <i class="h-thumb"></i>
      <svg class="grip" width="12" height="12"><path d="M8 0h3v3H8zM4 4h3v3H4zM8 4h3v3H8zM0 8h3v3H0zM4 8h3v3H4zM8 8h3v3H8z" fill="#b5b5b5"/></svg>
    </div>
    <div class="watermark"><span lang="ar" dir="rtl">مستقل</span><span>mostaql.com</span></div>
  </section>

  <aside class="properties">
    <div class="dock-title"><h2>Properties</h2><button class="close" aria-label="Close properties"></button></div>
    <div class="type-row">
      <span class="type-preview"><svg width="42" height="36" viewBox="0 0 40 36"><use href="#sheet"/></svg></span>
      <span>Sheet</span><i class="down"></i>
    </div>
    <div class="type-select">
      <select aria-label="Type"><option>Sheet: DRAINAGEPLAN</option></select>
      <button class="edit-type"><svg width="18" height="18"><path d="M1 1h7v6H1zM9 1h7v6H9zM1 8h7v7H1z" fill="none" stroke="#333"/><path d="M9 7h8v10H9z" fill="#fff" stroke="#333"/><path d="M11 9h4v2h-4z" fill="#2c7bc0"/><path d="M11 13h4M11 15h4" stroke="#333"/></svg>Edit Type</button>
    </div>
    <div class="props-area">
      <table class="props" id="props"></table>
      <div class="v-scroll"><i></i></div>
    </div>
    <div class="props-footer"><a href="#help">Properties help</a><button disabled>Apply</button></div>
  </aside>
</main>

<footer class="status">
  <span class="hint">Click to select, TAB for alternates, CTRL adds, SHIFT unselects.</span>
  <svg class="workset" width="20" height="22"><path d="M1 9h10v13H1z" fill="#3e93cf" stroke="#234"/><path d="M5 9V3l4-2 4 3v5" fill="#eee" stroke="#444"/><path d="M16 7v14M13 7v4h5V7" fill="none" stroke="#555" stroke-width="2"/></svg>
  <select class="workset-select" aria-label="Workset"><option>PL-Plumbing Fixtures</option></select>
  <svg class="requests" width="18" height="22"><path d="M4 2h12v7h-4l-4 5 1-5H4zM1 20l6-4" fill="none" stroke="#333" stroke-width="2"/></svg>
  <span class="count">:0</span>
  <svg class="options-icon" width="20" height="20"><path d="M1 2h18v17H1z" fill="#fff" stroke="#222" stroke-width="2"/><path d="M1 5h18" stroke="#222" stroke-width="3"/><path d="M4 10h5M4 14h5M11 10h5M11 14h5" stroke="#222" stroke-width="2"/></svg>
  <svg class="options-icon" width="20" height="20"><path d="M1 1h18v18H1z" fill="#999"/><path d="M2 5h8M10 9v8l3-3" fill="none" stroke="#ddd" stroke-width="2"/></svg>
  <select class="design-option" aria-label="Design option" disabled><option>Main Model</option></select>
  <label class="editable"><input type="checkbox">Editable Only</label>
  <div class="select-tools">
    <button aria-label="Select links"><svg width="22" height="20"><path d="M1 4h7v5H1z" fill="#f2c335" stroke="#a70"/><path d="M8 7v12l3-3 3 4M8 7l8 8" fill="#fff" stroke="#333"/><path class="cross" d="M12 1l8 8M20 1l-8 8"/></svg></button>
    <button aria-label="Select underlay"><svg width="22" height="20"><path d="M1 11L11 3v8zM1 16h13l4-4" fill="#cfe8f8" stroke="#2b6ea8" stroke-width="2"/><path class="cross" d="M12 1l8 8M20 1l-8 8"/></svg></button>
    <button aria-label="Select pinned"><svg width="22" height="20"><path d="M2 1h11v4l-2 2 3 4H1l3-4-2-2zM7 11v6" fill="#f0a040" stroke="#a4500b"/><path d="M12 8v11l3-3 3 3M12 8l7 7" fill="#fff" stroke="#333"/></svg></button>
    <button aria-label="Select by face"><svg width="22" height="20"><path d="M2 4l9-3v14l-9 4z" fill="#7fc4ee" stroke="#2b6ea8"/><path d="M11 8v11l3-3 3 3M11 8l7 7" fill="#fff" stroke="#333"/><path class="cross" d="M13 1l7 7M20 1l-7 7"/></svg></button>
    <button aria-label="Drag on selection"><svg width="22" height="20"><path d="M7 1v12M1 7h12M5 3l2-2 2 2M5 11l2 2 2-2" fill="none" stroke="#222" stroke-width="2"/><path d="M13 9v9l2-2 3 3M13 9l6 6" fill="#fff" stroke="#444"/><path class="cross" d="M13 1l7 7M20 1l-7 7"/></svg></button>
    <button aria-label="Background processes"><svg width="22" height="20"><circle cx="11" cy="10" r="6" fill="none" stroke="#a3a3a3" stroke-width="4" stroke-dasharray="4 1"/></svg></button>
    <button aria-label="Filter"><svg width="22" height="20"><path d="M1 1h19l-7 9v9H9v-9z" fill="#999" stroke="#444"/><path d="M3 3h15" stroke="#eee" stroke-width="2"/></svg></button>
    <span>:0</span>
  </div>
</footer>

<script src="script.js"></script>
</body>

</html>
```
FILE: styles.css
```css
* {
  box-sizing: border-box;
}

body {
  margin: 0;
  height: 100vh;
  display: flex;
  flex-direction: column;
  overflow: hidden;
  background: #ccc;
  color: #222;
  font: 15px/20px "Open Sans", "Noto Sans", sans-serif;
}

button,
input,
select {
  margin: 0;
  padding: 0;
  border: none;
  background: none;
  color: inherit;
  font: inherit;
}

h1,
h2 {
  margin: 0;
  font-size: 15px;
  font-weight: normal;
  white-space: nowrap;
}

svg {
  display: block;
}

.down {
  display: inline-block;
  border: 5px solid transparent;
  border-top-color: #333;
  border-bottom: none;
}

.close {
  width: 14px;
  height: 14px;
  background:
    linear-gradient(45deg, transparent 44%, #222 44%, #222 57%, transparent 57%),
    linear-gradient(-45deg, transparent 44%, #222 44%, #222 57%, transparent 57%);
}

/* title bar */

.titlebar {
  height: 37px;
  display: flex;
  flex: none;
  justify-content: space-between;
  background: #808080;
  color: #f4f4f4;
}

.quick,
.account,
.window-buttons {
  display: flex;
  align-items: center;
}

.quick {
  padding-bottom: 5px;
}

.q-logo {
  width: 31px;
  padding-left: 8px;
}

.q-icon {
  width: 30px;
  display: flex;
  justify-content: center;
}

.q-open {
  margin-left: 6px;
}

.q-text {
  color: #333;
  font: bold 24px/24px "Liberation Sans", sans-serif;
}

.q-drop {
  width: 14px;
  height: 20px;
  display: grid;
  place-content: center;
}

.q-drop::after {
  content: "";
  border: 3px solid transparent;
  border-top: 4px solid #333;
  border-bottom: none;
}

.q-custom {
  padding: 0 6px 0 4px;
}

.q-sep {
  width: 1px;
  height: 28px;
  margin: 0 6px;
  background: #999;
}

.doc-title {
  padding-top: 2px;
}

.account {
  padding: 0 7px 6px 0;
}

.q-left {
  border: 6px solid transparent;
  border-right-color: #333;
  border-left: none;
  margin-right: 4px;
}

.sign-in {
  display: flex;
  align-items: center;
  gap: 7px;
  margin: 0 56px 0 2px;
}

.window-buttons {
  gap: 16px;
  margin-left: 80px;
}

/* ribbon tabs */

.tabs {
  height: 25px;
  display: flex;
  flex: none;
  background: #808080;
  color: #f2f2f2;
}

.tabs button {
  padding: 0 11px 1px;
}

.tabs .tab-file {
  width: 57px;
  margin-right: 3px;
  background: #2a7ab8;
}

.tabs .tab-active {
  width: 76px;
  padding: 0 0 1px;
  background: #eee;
  color: #222;
}

.tabs .tab-toggle {
  padding-left: 28px;
}

/* ribbon */

.ribbon {
  height: 121px;
  display: flex;
  flex: none;
  background: #eee;
  border-bottom: 1px solid #808080;
  overflow: hidden;
}

.panel {
  display: flex;
  flex: none;
  flex-direction: column;
  border-right: 1px solid #d8d8d8;
}

.tools {
  height: 98px;
  display: grid;
  align-items: start;
  padding-top: 6px;
}

.tool {
  display: flex;
  flex-direction: column;
  align-items: center;
  color: #a6a6a6;
  font-size: 14px;
}

.tool svg {
  height: 40px;
  margin-bottom: 5px;
}

.tool .down {
  border-width: 4px;
  border-top-color: #777;
  margin-top: 4px;
}

.tool-modify {
  width: 54px;
  height: 90px;
  margin: -2px 0 0 9px;
  border: 1px solid #0f6cbd;
  background: #b9d8f2;
  color: #222;
}

.tool-modify svg {
  margin: 2px 0 4px;
}

.small-tools {
  display: grid;
  justify-items: center;
  gap: 10px;
  padding-top: 3px;
}

.tool-sep {
  width: 1px;
  height: 90px;
  justify-self: center;
  background: #ccc;
}

.panel-title {
  height: 22px;
  position: relative;
  text-align: center;
}

.has-launch {
  padding-right: 14px;
}

.panel-title .down {
  margin: 0 0 2px 4px;
}

.launch {
  position: absolute;
  right: 5px;
  top: 8px;
  width: 7px;
  height: 7px;
  border: solid #333;
  border-width: 0 2px 2px 0;
  background: linear-gradient(45deg, transparent 40%, #333 40% 60%, transparent 60%);
}

.panel-select { width: 73px; }
.panel-hvac { width: 297px; }
.panel-fabrication { width: 166px; }
.panel-pid { width: 159px; }
.panel-mechanical { width: 103px; }
.panel-plumbing { width: 377px; }
.panel-electrical { width: 511px; }
.panel-model { width: 112px; }

.panel-plane {
  flex: 1;
  border: none;
}

.panel-hvac .tools { grid-template-columns: 52px 80px 36px 10px 56px 55px; }
.panel-fabrication .tools { grid-template-columns: 84px 78px; }
.panel-plumbing .tools { grid-template-columns: 52px 82px 62px 22px 20px 66px 72px; }
.panel-electrical .tools { grid-template-columns: 64px 6px 56px 54px 70px 28px 14px 82px 70px 64px; }
.panel-plane .tools { grid-template-columns: 56px 26px; }

.panel-plane .panel-title {
  padding-left: 6px;
  text-align: left;
}

.art {
  fill: #ececec;
  stroke: #b4b4b4;
  stroke-width: 2;
  overflow: visible;
}

.small-tools .art {
  fill: #dcdcdc;
  stroke: #a8a8a8;
  stroke-width: 1;
}

.art .shade { fill: #dedede; }
.art .hole { fill: #ccc; }
.art .dot { fill: #b4b4b4; }
.art .thin { fill: none; }
.art .pipe-edge { fill: none; stroke-width: 12; }
.art .pipe { fill: none; stroke: #e6e6e6; stroke-width: 8; }
.faint { opacity: .5; }

.options-bar {
  height: 33px;
  flex: none;
  background: #eee;
}

/* docks */

.workspace {
  flex: 1;
  min-height: 0;
  display: grid;
  grid-template-columns: 244px 1fr 270px;
  gap: 2px;
  padding: 2px 0 3px;
}

.browser,
.properties,
.views {
  min-width: 0;
  min-height: 0;
  display: flex;
  flex-direction: column;
}

.browser,
.properties {
  background: #eee;
}

.dock-title {
  height: 24px;
  display: flex;
  flex: none;
  align-items: center;
  justify-content: space-between;
  padding: 0 6px 0 4px;
  color: #444;
}

.properties .dock-title {
  padding: 0 1px 0 3px;
}

.tree-area,
.props-area {
  flex: 1;
  min-height: 0;
  display: flex;
  overflow: hidden;
}

.tree {
  width: 220px;
  margin: 0 0 0 2px;
  padding: 0;
  overflow: hidden;
  list-style: none;
  background: #fff;
  color: #000;
}

.tree li {
  height: 22px;
  display: flex;
  align-items: center;
  position: relative;
  padding-left: 30px;
  white-space: nowrap;
}

.tree .root {
  gap: 8px;
  padding-left: 4px;
}

.tree li::before,
.sheet::after {
  content: "";
  position: absolute;
  top: 0;
  left: 10px;
  height: 22px;
  border-left: 1px dotted #999;
}

.sheet::after {
  left: 36px;
}

.sheet span {
  margin-left: 12px;
  padding: 0 3px;
  line-height: 22px;
}

.sheet .toggle::after {
  content: "";
  position: absolute;
  top: 5px;
  left: 13px;
  width: 10px;
  border-top: 1px dotted #999;
}

.sheet.active span {
  background: #e2e2e2;
  font-weight: bold;
}

.toggle {
  width: 13px;
  height: 13px;
  position: relative;
  z-index: 1;
  flex: none;
  border: 1px solid #999;
  background:
    linear-gradient(#2b54a0, #2b54a0) center / 9px 1px no-repeat,
    linear-gradient(#2b54a0, #2b54a0) center / 1px 9px no-repeat,
    linear-gradient(#fff, #e4e4e4);
}

.minus {
  background:
    linear-gradient(#2b54a0, #2b54a0) center / 9px 1px no-repeat,
    linear-gradient(#fff, #e4e4e4);
}

.v-scroll i {
  display: block;
  width: 3px;
  border-radius: 2px;
  background: #858585;
}

.browser .v-scroll {
  padding: 65px 0 0 8px;
}

.browser .v-scroll i {
  height: 464px;
}

.h-scroll {
  height: 19px;
  flex: none;
  padding: 8px 0 0 24px;
}

.h-scroll i {
  display: block;
  width: 74px;
  height: 3px;
  background: #858585;
}

/* views */

.views {
  position: relative;
}

.view-tabs {
  height: 25px;
  display: grid;
  grid-template-columns: 310px 160px 307px 1fr;
  flex: none;
  align-items: center;
}

.view-tabs button {
  height: 25px;
  display: flex;
  align-items: center;
  gap: 7px;
  padding: 0 0 1px 6px;
  color: #444;
  white-space: nowrap;
}

.view-tabs .current {
  background: #fff;
  color: #222;
  font-weight: bold;
}

.view-tabs .current .close {
  margin-left: 4px;
}

.view-tabs .down {
  justify-self: end;
  margin-right: 8px;
}

.view-body {
  flex: 1;
  min-height: 0;
  display: flex;
  background: #f0f0f0;
  border: 2px solid #fff;
  border-bottom: none;
}

.canvas {
  flex: 1;
  position: relative;
  background: #000;
}

.drawing {
  width: 100%;
  height: 100%;
  position: absolute;
}

.view-scroll {
  width: 23px;
  padding: 350px 0 0 9px;
}

.view-scroll i {
  display: block;
  width: 3px;
  height: 19px;
  background: #777;
}

.nav-bar {
  position: absolute;
  top: 2px;
  right: 2px;
  width: 32px;
  height: 114px;
  display: flex;
  flex-direction: column;
  align-items: center;
  gap: 24px;
  padding-top: 20px;
  border-radius: 3px;
  background: #444;
}

.nav-more {
  margin-top: auto;
  border: 3px solid transparent;
  border-top-color: #ddd;
}

.view-controls {
  height: 21px;
  display: flex;
  flex: none;
  align-items: center;
  gap: 10px;
  padding: 0 6px 0 4px;
  background: #f0f0f0;
  border-bottom: 1px solid #fff;
}

.h-thumb {
  width: 20px;
  height: 3px;
  margin: 0 auto;
  background: #888;
}

.watermark {
  position: absolute;
  right: 570px;
  bottom: -6px;
  display: grid;
  justify-items: end;
  color: rgba(185, 185, 185, .42);
  font: bold 37px/40px "Liberation Sans", sans-serif;
  pointer-events: none;
}

.watermark [lang] {
  font: bold 65px/80px "DejaVu Sans", sans-serif;
}

/* sheet drawing */

.drawing path,
.drawing circle {
  fill: none;
}

.drawing .frame,
.drawing .block {
  stroke: #fff;
  shape-rendering: crispEdges;
}

.plan { stroke-width: 4; }
.drawing .block { stroke-width: 3; }
.drawing .heavy { stroke-width: 2; }
.outline { stroke: #585858; }
.clutter { stroke: #5c5c5c; }
.cyan { stroke: #00c0c0; stroke-width: 3; }
.cyan.bold { stroke: #00d0d0; stroke-width: 5; }
.red { stroke: #b01c1c; }
.yellow { stroke: #e8d810; }
.magenta { stroke: #903060; }
.tags { stroke: #eee; stroke-width: 3; }
.view-title { stroke: #fff; }
.drawing .block .thin { stroke-width: 2; }

.drawing text {
  fill: #fff;
  stroke: none;
  font-family: "Liberation Sans", "DejaVu Sans", sans-serif;
}

.drawing .solid, .drawing .key-solid { fill: #fff; }
.drawing .key-hatch { stroke: #000; stroke-width: 3; }
.drawing .speckle { stroke: #333; stroke-width: 17; }
.drawing .roof { stroke: #a0522d; stroke-width: 3; }
.drawing .tiny text { font-weight: bold; }
.drawing .mid text { text-anchor: middle; }
.drawing .arabic text { text-anchor: end; }
.drawing .logo-text text { fill: #000; font-weight: bold; text-anchor: middle; }
.drawing .serif { font-family: "Liberation Serif", serif; font-weight: bold; text-anchor: middle; }

/* properties */

.type-row {
  height: 88px;
  display: flex;
  flex: none;
  align-items: center;
  gap: 6px;
  padding-left: 4px;
  border-top: 1px solid #d4d4d4;
  color: #444;
}

.type-row .down {
  margin-left: auto;
}

.type-preview {
  width: 82px;
  height: 82px;
  display: grid;
  place-content: center;
  border: 1px solid #ccc;
}

.type-select {
  height: 30px;
  display: flex;
  flex: none;
  padding: 0 0 2px 1px;
}

select {
  appearance: none;
  background:
    linear-gradient(to top right, transparent 44%, #777 44% 57%, transparent 57%) calc(100% - 12px) 50% / 6px 6px no-repeat,
    linear-gradient(to top left, transparent 44%, #777 44% 57%, transparent 57%) calc(100% - 7px) 50% / 6px 6px no-repeat,
    #fff;
}

.type-select select {
  width: 173px;
  padding: 0 20px 0 3px;
  border: 1px solid #bbb;
  color: #000;
}

.edit-type {
  display: flex;
  align-items: center;
  gap: 4px;
  margin-left: 6px;
  white-space: nowrap;
}

.props {
  width: 249px;
  height: 600px;
  margin-left: 1px;
  border-spacing: 0;
  table-layout: fixed;
  background: #fff;
  color: #000;
}

.props td,
.props th {
  height: 24px;
  padding: 0;
  border: dotted #777;
  border-width: 0 1px 1px 0;
  font-weight: normal;
  line-height: 20px;
  text-align: left;
  vertical-align: top;
  white-space: nowrap;
}

.props td.name {
  padding-left: 9px;
  overflow: hidden;
}

col.name,
col.value {
  width: 117px;
}

.props .group {
  padding: 1px 7px 0 2px;
  border: none;
  background: #dadada;
  color: #444;
}

.group svg {
  float: right;
}

.value input {
  width: 100%;
  height: 23px;
  display: block;
  padding: 0 0 2px 2px;
  outline: none;
}

.value .focused {
  border: 1px solid #000;
}

.value button {
  width: 113px;
  height: 21px;
  display: block;
  margin-left: 2px;
  border: 1px solid #ccc;
  border-bottom: 2px solid #bbb;
  border-radius: 4px;
  line-height: 18px;
}

.muted {
  color: #8a8a8a;
}

.pick {
  width: 12px;
  height: 21px;
  display: block;
  margin: 1px 0 0 1px;
  border: 1px solid #bbb;
  border-radius: 4px;
}

.properties .v-scroll {
  padding: 21px 0 0 8px;
}

.properties .v-scroll i {
  height: 182px;
}

.props-footer {
  height: 30px;
  display: flex;
  flex: none;
  align-items: center;
  justify-content: space-between;
  padding: 0 2px 0 3px;
}

.props-footer a {
  margin-bottom: 6px;
  color: #0066b4;
}

.props-footer button {
  width: 84px;
  height: 25px;
  border-radius: 4px;
  background: #f8f8f8;
  color: #888;
}

/* status bar */

.status {
  height: 24px;
  display: flex;
  flex: none;
  align-items: flex-start;
  padding: 4px 68px 0 2px;
  overflow: hidden;
}

.status svg {
  margin-top: 2px;
}

.status select {
  height: 24px;
  flex: none;
  padding-left: 3px;
  line-height: 22px;
}

.status .hint,
.status .editable,
.status .count,
.select-tools span {
  flex: none;
  font-size: 14px;
  line-height: 24px;
}

.status .workset { margin-left: auto; }
.status .workset-select { width: 254px; margin: 0 8px 0 9px; }
.status .count { margin: 0 24px 0 6px; }
.status .options-icon { margin-right: 9px; }
.status .design-option { width: 254px; color: #888; }

.editable {
  display: flex;
  align-items: center;
  gap: 5px;
  margin: 0 11px 0 156px;
}

.editable input {
  appearance: none;
  width: 18px;
  height: 18px;
  border: 1px solid #555;
  background: #eee;
}

.status .hint {
  margin-right: auto;
}

.select-tools {
  display: flex;
  gap: 8px;
}

.select-tools .cross {
  stroke: #9c1010;
  stroke-width: 3;
}
```
FILE: script.js
```js
// sheet list
const tree = document.getElementById('sheet-tree');
const sheets = [];
for (let n = 100; n < 120; n++) sheets.push(n);
for (let n = 200; n < 212; n++) sheets.push(n);

sheets.forEach((number, i) => {
  const name = i === 0 ? `${number} - DRAINAGEPLAN` : `${number} - DRAINAGEPLAN -`;
  tree.insertAdjacentHTML(
    'beforeEnd',
    `<li class="sheet${i === 0 ? ' active' : ''}"><button class="toggle" aria-label="Expand"></button><span>${name}</span></li>`
  );
});

// property rows: a lone string starts a group
const properties = [
  'Constraints',
  ['LOD Numberi...', '', 'focused'],
  ['Main Category', ''],
  ['Sub-Main Cat...', ''],
  ['Discipline', ''],
  'Graphics',
  ['Visibility/Grap...', 'Edit...', 'button'],
  ['Scale', '1 : 750', 'muted'],
  ['Sheet Scale', ''],
  ['Scale', ''],
  'Text',
  ['Drawing No.', '101'],
  ['00 Revision', ''],
  ['00 Revision D...', ''],
  ['REF NUM.', ''],
  ['EDC-TTL-ZONE', 'M'],
  ['EDC-TTL-PROJ...', 'KYN'],
  ['EDC-TTL-FIRM', 'EDC'],
  ['EDC-TTL-STA...', 'DD'],
  ['EDC-TTL-PART', 'M'],
  ['EDC-TTL-BUIL...', 'XX'],
  ['EDC-TTL-LEVE...', 'B03'],
  ['EDC-TTL-DISC', 'DR'],
  ['EDC-TTL-TYPE', 'DWG'],
  ['EDC-TTL-DRG....', '101']
];

const chevrons = '<svg width="8" height="12"><path d="M1 5l3-3 3 3M1 10l3-3 3 3" fill="none" stroke="#111" stroke-width="2"/></svg>';

// the column widths come from a colgroup, as the first row spans all three
let rows = '<colgroup><col class="name"><col class="value"><col></colgroup>';
properties.forEach((row, i) => {
  if (typeof row === 'string') {
    rows += `<tr><th class="group" colspan="3">${chevrons}${row}</th></tr>`;
    return;
  }
  const [name, value, kind = ''] = row;
  const field = kind === 'button'
    ? `<button id="p${i}">${value}</button>`
    : `<input id="p${i}" class="${kind}" value="${value}">`;
  const pick = kind === 'button' || kind === 'muted' ? '' : '<button class="pick" aria-label="Associate"></button>';
  rows += `<tr><td class="name ${kind === 'muted' ? 'muted' : ''}"><label for="p${i}">${name}</label></td><td class="value">${field}</td><td>${pick}</td></tr>`;
});
document.getElementById('props').innerHTML = rows;

// fixed seed, so the plan is the same on every load
let seed = 7;
function random() {
  seed = (seed * 16807) % 2147483647;
  return seed / 2147483647;
}

// walls and parking bays: combs and zigzags that run down the slope of the building
let walls = '';
for (let row = -4; row < 30; row++) {
  let step = 0;
  while (step < 46) {
    const x = Math.round(616 - row * 17 + step * 20 + random() * 8);
    const y = Math.round(66 + row * 17 + step * 20 + random() * 8);
    const run = 2 + Math.floor(random() * 4);
    const kind = random();
    if (kind < 0.4) {
      walls += `M${x} ${y}`;
      for (let i = 0; i < run * 2; i++) walls += 'l9 -9l5 5l-9 9l5 5';
    } else if (kind < 0.65) {
      walls += `M${x} ${y}l${run * 18} ${run * 18}`;
      for (let i = 0; i < run * 2; i++) walls += `M${x + i * 9} ${y + i * 9}l10 -10`;
    } else if (kind < 0.8) {
      for (let i = 0; i < run; i++) walls += `M${x + i * 17} ${y + i * 17}l10 10M${x + 9 + i * 17} ${y - 6 + i * 17}l7 7`;
    } else if (kind < 0.9) {
      walls += `M${x} ${y}l22 -22l22 22l-22 22z`;
    } else {
      walls += `M${x} ${y}h6v6`;
    }
    step += run + (random() < 0.3 ? 1 : 0);
  }
}
document.getElementById('clutter').setAttribute('d', walls);

// pipe tags: small dashes scattered along the drainage runs
let tags = '';
document.querySelectorAll('.cyan').forEach((path) => {
  const length = path.getTotalLength();
  for (let at = 0; at < length; at += 20) {
    const p = path.getPointAtLength(at);
    const x = Math.round(p.x + random() * 22 - 16);
    const y = Math.round(p.y + random() * 16 - 8);
    tags += `M${x} ${y}h${Math.round(8 + random() * 12)}`;
  }
});
[[615, 315], [790, 265], [510, 445], [375, 548], [790, 483], [668, 612], [703, 750], [520, 692], [843, 768], [968, 658], [885, 588], [1095, 570], [1165, 885], [1042, 965], [722, 925], [770, 965], [945, 1115], [1022, 1205]].forEach(([x, y]) => {
  tags += `M${x - 8} ${y - 5}h14M${x - 5} ${y}h16M${x - 9} ${y + 5}h13M${x} ${y - 9}v18`;
});
document.getElementById('tags').setAttribute('d', tags);

// key plan hatch
let hatch = '';
for (let i = -16; i < 16; i++) {
  hatch += `M122 ${312 + i * 12}l${60 + Math.round(random() * 120)} ${60 + Math.round(random() * 90)}`;
}
for (let i = 0; i < 90; i++) {
  const x = 145 + Math.round(random() * 150);
  const y = 315 + Math.round(random() * 150);
  hatch += `M${x} ${y}v${Math.round(6 + random() * 14)}`;
}
hatch += 'M144 325v75M170 472h86M140 420l22 26M160 455l14 16';
document.getElementById('key-hatch').setAttribute('d', hatch);

function addText(id, x, y, text) {
  const node = document.createElementNS('http://www.w3.org/2000/svg', 'text');
  node.setAttribute('x', x);
  node.setAttribute('y', y);
  node.textContent = text;
  document.getElementById(id).append(node);
}

[
  '01. ALL DIMENSIONS ARE IN MILLIMETERS (mm) UNLESS OTHERWISE STATED.',
  '02. ALL LEVELS ARE IN METERS (m) UNLESS OTHERWISE STATED.',
  '03. DO NOT SCALE DRAWINGS, DIMENSIONS ONLY SHALL GOVERN.',
  '04. THIS DRAWING SHALL BE READ IN CONJUNCTION WITH ALL RELEVANT',
  'DRAWINGS',
  'AND PROJECT SPECIFICATIONS.',
  '05. DETAILS SHOWN ARE FOR DESIGN INTENT. CONTRACTOR SHALL SUBMIT SHOP',
  'DRAWINGS FOR ARCHITECTS APPROVAL.',
  '06. THE CONTRACTOR SHALL SUBMIT SHOP DRAWINGS FOR ALL',
  'EXTERIOR CLADDING SYSTEMS PRIOR TO ANY INSTALLATIONS.',
  '07. ALL BLOCK WORKS CONTAIN GALVANIZED CORRUGATED ANCHOR FOR',
  'REINFORCING',
  'CEMENT WALLS AND COLUMNS.',
  '08. ALL BLOCK WORKS CONTAIN HORIZONTAL METAL BLOCK REINFORCEMENTS',
  'WIRE MESH.',
  '09. ALL BLOCK WORKS CONTAIN PLASTER STOP BEADS (ANGLE BEAD), PLASTER',
  'STOP,',
  'ARCHITRAVE BEAD, MOVEMENT BEAD, EXPANDED METAL LATH ......)',
  '10. ALL BLOCK WALLS BETWEEN FIRE ZONES AND CORE CORRIDOR SHALL BE FIRE',
  'RESISTANT.',
  '11. SKY LEVEL EQUAL (.......) M NATURAL LEVEL'
].forEach((line, i) => addText('notes', 63, 576 + i * 11, line));

[
  ['رقم العضوية', 'المرتبة المهنية', 'اسم المهندس', 'التخصص'],
  ['٢٥٨٠٩٣', 'مهندس', 'عبدالرحمن اشرف حافظ', 'المهندس المعماري'],
  ['٨٥٣٧٩', 'مهندس', 'اعتدال رستق', 'المهندس الانشائي'],
  ['٦٧٤٥٢٣', 'مشارك', 'علي محمد محمد', 'المهندس الكهربائي'],
  ['٧٩٠٠٨', 'مشارك', 'محمد احمد صيرفي', 'المهندس الميكانيكي'],
  ['٩٠٥٣٦٨', 'اخصائي', 'يسري عبدالعزيز اعظم', 'مهندس مدني'],
  ['٦٧٤٢٣', 'مشارك', 'وائل مصطفى عبدالجليل', 'مدير المشروع'],
  ['٦٢٠٣٥٧', 'مستشار', 'عبدالاله المهنا', 'المدير العام'],
  ['٥٣٣٤٠٨', 'مهندس', 'مهندس اشرف القواش', 'المهندس المراجع']
].forEach((row, i) => {
  [88, 146, 243, 349].forEach((x, column) => addText('approvals', x, 487 + i * 23, row[column]));
});

['KYN', 'EDC', 'DD', 'M', 'M', 'XX', 'B03', 'PL', 'DWG', '100', '00'].forEach((code, i) => {
  addText('codes', 67 + i * 32, 922, code);
  addText('codes', 67 + i * 32, 897, '•••');
});
```
